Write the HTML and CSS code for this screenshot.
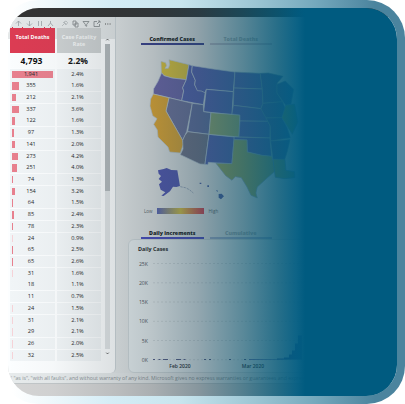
FILE: index.html
```
<!DOCTYPE html>
<html lang="en">
<head>
<meta charset="utf-8">
<title>Dashboard</title>
<link rel="stylesheet" href="styles.css">
</head>
<body>
<div class="frame">
<main class="panel">
  <div class="topbar"></div>
  <div class="content">
    <section class="left">
      <svg class="tools" viewBox="0 0 108 11" fill="none" stroke="#9aa1a4" stroke-width=".8">
        <path d="M10.500 9V4M8 6.500l2.500-2.500 2.500 2.500M21.500 4v5M19 6.500l2.500 2.500 2.500-2.500M30.500 4v5M33.500 4v5M42.500 4v2l-2.500 3M42.500 6l2.500 3"/>
        <path d="M54 9l2-2M55 5l3 3M56 5l2-1 1.500 1.500-1 2z" stroke="#b0b5b7"/>
        <path d="M65 4h3v4h-3zM67 6h3v4h-3zM75 4.500h6l-2.300 2.800v2l-1.400-.7V7.300zM89 4.500h-3v5h5.500V7M89 7l3-3M90 4h2v2" stroke="#7d8487"/>
        <path d="M97 7h1M99.300 7h1M101.600 7h1" stroke="#555" stroke-width="1"/>
        <path d="M4 10.500h1M14 10.500h1M25 10.500h1M36 10.500h1M42 10.500h1" stroke="#d6354b" stroke-width="1"/>
      </svg>
      <div class="tablewrap">
        <div class="table">
          <div class="row head"><div class="h red">Total Deaths</div><div class="h gray">Case Fatality<br>Rate</div></div>
          <div class="row total"><div>4,793</div><div>2.2%</div></div>
          <div id="rows"></div>
        </div>
        <div class="scroll">
          <svg viewBox="0 0 6 5"><path d="M1.500 3.500L3 2l1.500 1.500"/></svg>
          <div class="track"><div class="thumb"></div></div>
          <svg viewBox="0 0 6 5"><path d="M1.500 1.500L3 3l1.500-1.500"/></svg>
        </div>
      </div>
    </section>
    <section class="right">
      <div class="tabs"><div class="tab on navy">Confirmed Cases</div><div class="tab rose">Total Deaths</div></div>
      <svg class="map" viewBox="420 165 490 435" stroke="#c3d0dc" stroke-width="2" stroke-linejoin="round">
        <g fill="#5762b4">
          <path fill="#e5c93a" d="M483 181L497 185 500 194 495 202 505 202 509 191 507 176 567 191 559 236 516 231 492 224 484 215Z"/>
          <path fill="#6e67ad" d="M485 215L492 224 516 231 559 236 548 260 551 270 545 299 460 279 461 263 474 241Z"/>
          <path d="M567 191L577 194 575 213 586 238 584 251 592 266 616 272 610 311 545 299 551 270 548 260 559 236Z"/>
          <path d="M577 194L640 204 705 213 700 272 619 265 615 275 604 270 592 269 584 251 586 238 575 213Z"/>
          <path d="M619 265L700 272 696 341 611 332Z"/>
          <path fill="#7275a0" d="M507 290L577 307 560 392 555 403 548 418 498 330Z"/>
          <path fill="#6670a3" d="M577 307L610 311 611 332 633 335 627 400 563 392Z"/>
          <path fill="#e6aa31" d="M460 279L507 290 498 330 548 418 550 430 541 456 509 453 504 438 486 420 474 408 472 387 461 370 471 353 458 344 450 315 452 294Z"/>
          <path fill="#74768c" d="M563 392L627 400 615 490 600 489 541 461 549 444 548 418 555 403Z"/>
          <path d="M627 400L703 408 696 488 652 486 625 484 624 491 615 490Z"/>
          <path fill="#9cae70" d="M633 335L720 342 717 408 627 400Z"/>
        </g>
        <g fill="#5762b4" stroke="#93abc0">
          <path d="M705 213L781 217 787 264 702 261Z"/><path d="M702 261L787 264 789 307 783 323 700 313Z"/>
          <path d="M700 313L783 323 792 326 804 361 720 360 720 342 696 339Z"/><path d="M720 360L804 361 811 375 810 411 717 408Z"/>
          <path d="M703 408L810 411 815 466 785 463 742 453 741 417 702 416Z"/>
          <path fill="#a4ad5c" d="M702 416L741 417 742 453 785 463 815 466 820 481 826 510 804 529 772 558 768 576 772 591 753 583 741 558 724 530 706 527 696 538 677 524 648 487 696 488Z"/>
        </g>
        <g fill="#4a62a8" stroke="#6f93ac">
          <path d="M781 217L805 216 849 226 832 246 831 276 848 302 789 307 787 264Z"/>
          <path d="M789 307L848 302 857 325 846 350 798 351 783 323Z"/>
          <path d="M798 351L846 350 862 381 871 410 812 420 811 375Z"/>
          <path d="M812 420L870 416 862 451 854 476 819 475Z"/>
          <path fill="#9cac59" d="M819 475L855 475 858 508 884 512 885 530 854 533 826 529Z"/>
          <path d="M831 250L856 240 881 265 873 310 857 313 831 276Z"/>
          <path fill="#8faa50" d="M857 313L884 309 894 363 877 400 846 350Z"/>
        </g>
        <path fill="#5358b5" stroke="none" d="M474 508L491 504 500 501 514 507 532 508 540 555 529 558 519 557 510 571 491 585 484 584 496 574 482 566 477 550 486 542 476 534 483 525 476 518Z"/>
        <path fill="none" stroke="#7e8fae" d="M541 557l15 3 12 6 12 10" stroke-dasharray="7 3"/>
        <path fill="#4c60a6" stroke="none" d="M656 579l9-1 7 8-9 9-7-5zM599 545h5v4h-5zM622 553h5v5h-5zM648 567l6 2-2 4z"/>
      </svg>
      <div class="legend"><span>Low</span><i></i><span>High</span></div>
      <div class="tabs second"><div class="tab on violet">Daily increments</div><div class="tab blue">Cumulative</div></div>
      <div class="chart">
        <h2>Daily Cases</h2>
        <svg viewBox="0 0 260 115">
          <g stroke="#bdc6ca" stroke-width=".5" stroke-dasharray="2 2"><path d="M25 7.500H250M25 26.800H250M25 46H250M25 65.300H250M25 84.500H250M25 103.700H250"/></g>
          <g class="axis"><text x="20" y="9.500">25K</text><text x="20" y="28.800">20K</text><text x="20" y="48">15K</text><text x="20" y="67.300">10K</text><text x="20" y="86.500">5K</text><text x="20" y="105.700">0K</text></g>
          <path fill="none" stroke="#30396f" stroke-width=".8" d="M25 103.500h2M30.500 103.500h2M35 103.500h5M48 103.500h5M55.500 103.500h2M76 103.500h2M81 103.500h2M101 103.500h2M116 103.500h2"/>
          <path fill="#4450a0" d="M121 104v-.8h28v-.7h7v-1h5v-3h3v-4h3v-7h3v-8h4v24z"/>
          <g class="months"><text x="52" y="112">Feb 2020</text><text x="125" y="112">Mar 2020</text></g>
        </svg>
      </div>
    </section>
  </div>
  <div class="notice">' "as is", "with all faults", and without warranty of any kind. Microsoft gives no express warranties or guarantees and expressly</div>
  <div class="shade"></div>
</main>
</div>
<script src="script.js"></script>
</body>
</html>
```
FILE: styles.css
```
* { box-sizing: border-box; }
body { margin: 0; background: #fff; font-family: "Open Sans", sans-serif; color: #25282a; }
.frame { width: 405px; height: 404px; padding: 8px; border-radius: 38px; background: linear-gradient(90deg, #fff 0, #fff 12px, #d5edf6 110px, #c8e5ee 180px, #9cc6d4 255px, #75a9bd 315px, #4b849e 375px, #4b849e 100%); }
.panel { position: relative; width: 389px; height: 388px; border-radius: 31px; overflow: hidden; display: flex; flex-direction: column; background: #d5d5d5; }
.topbar { height: 9px; flex: none; background: #333; }
.content { height: 356px; flex: none; display: flex; background: #e4e8e9; }
.left { width: 108px; flex: none; display: flex; flex-direction: column; background: linear-gradient(#e4e8e9 0 22px, #fcfeff 22px); border-right: 1px solid #ccd4d8; border-radius: 0 0 5px 0; }
.tools { display: block; width: 108px; height: 11px; flex: none; }
.tablewrap { display: flex; padding-left: 2px; }
.table { width: 91px; font-size: 5.6px; font-weight: 500; }
.row { display: grid; grid-template-columns: 45px 44px; gap: 2px; height: 11.72px; padding-bottom: 1px; text-align: center; line-height: 11px; }
.row > div { position: relative; background: #f1f5f7; }
.row span { position: relative; left: -1.5px; }
.row .bar { position: absolute; left: 2px; top: 2px; height: 7.500px; background: #e8808e; }
.row .bar.low { background: #f6d3d8; }
.row.head { height: 25px; padding: 0; font-weight: 700; font-size: 5.4px; line-height: 7px; color: #fff; }
.row .h { padding-top: 5.5px; }
.row .red { background: #dc3c53; }
.row .gray { background: #cdd1d2; color: #f4f6f6; }
.row.total { height: 15.500px; font-size: 8.500px; line-height: 15px; font-weight: 700; color: #111; }
.row.total > div { background: #fbfdfe; padding-right: 2px; }
.scroll { width: 5px; height: 330px; margin-left: 4px; padding-top: 7px; display: flex; flex-direction: column; }
.scroll svg { height: 9px; fill: none; stroke: #333; stroke-width: .9; flex: none; }
.track { flex: 1; background: #e1e5e7; }
.thumb { width: 5px; height: 147px; background: #b4babd; }
.right { width: 281px; padding: 17px 0 0 12px; }
.tabs { display: flex; gap: 6px; margin-left: 13px; height: 11px; }
.tab { width: 62.500px; height: 11px; text-align: center; font-size: 5.3px; font-weight: 800; line-height: 10px; color: #a5adb0; border-bottom: 2.500px solid #c2bdc8; }
.tab.on { color: #121416; }
.tab.navy { border-color: #39408f; }
.tab.violet { border-color: #4a4cc4; }
.tab.blue { border-color: #a4b2cf; }
.map { display: block; width: 163.300px; height: 145px; margin: 11px 0 0 12px; }
.legend { display: flex; align-items: center; height: 8px; margin: 6px 0 0 16px; font-size: 4.500px; color: #5f686c; gap: 5px; }
.legend i { width: 46.500px; height: 5.500px; background: linear-gradient(90deg, #5966b9, #d9c344 50%, #d83c50); }
.legend span:first-child { width: 8px; }
.tabs.second { margin-top: 13px; }
.chart { width: 267px; height: 134px; padding: 5px 0 0 9px; border: 1px solid #d2dadd; border-radius: 6px; background: #ebf2f4; }
.chart h2 { margin: 0; font-size: 5.4px; line-height: 9px; font-weight: 700; }
.chart svg { display: block; width: 260px; height: 115px; margin-left: -10px; margin-top: 2px; }
.axis text { font-size: 5.200px; text-anchor: end; fill: #50575a; }
.months text { font-size: 5px; font-weight: 600; text-anchor: middle; fill: #25292c; }
.notice { height: 11px; flex: none; padding-left: 3px; border-bottom: 1px solid #c2c7c9; font-size: 5.150px; line-height: 10px; white-space: nowrap; color: #8a9296; background: #e7ebec; }
.shade { position: absolute; inset: 0; background: linear-gradient(90deg, rgba(40,55,62,0) 0, rgba(40,55,62,.03) 45px, rgba(40,55,62,.15) 108px, rgba(40,60,70,.25) 145px, rgba(32,68,85,.43) 190px, rgba(15,82,106,.66) 235px, rgba(5,88,119,.85) 270px, rgba(0,91,128,.95) 289px, #005b80 297px); }
```
FILE: script.js
```
const data = [
  ["1,941", "2.4%", 41], ["355", "1.6%", 7], ["212", "2.1%", 4], ["337", "3.6%", 7],
  ["122", "1.6%", 2.5], ["97", "1.3%", 2], ["141", "2.0%", 2.5], ["273", "4.2%", 5.5],
  ["251", "4.0%", 5], ["74", "1.3%", 1.3], ["154", "3.2%", 3], ["64", "1.5%", 1.3],
  ["85", "2.4%", 1.6], ["78", "2.3%", 1.4], ["24", "0.9%", 0.6], ["65", "2.5%", 1.3],
  ["65", "2.6%", 1.3], ["31", "1.6%", 0.6], ["18", "1.1%", 0], ["11", "0.7%", 0],
  ["24", "1.5%", 0.6], ["31", "2.1%", 0.6], ["29", "2.1%", 0.6], ["26", "2.0%", 0.6], ["32", "2.5%", 0.6]
];
document.getElementById("rows").innerHTML = data.map(([n, p, w]) =>
  `<div class="row"><div><i class="bar${w < 1 ? " low" : ""}" style="width:${w}px"></i><span>${n}</span></div><div><span>${p}</span></div></div>`
).join("");
```
